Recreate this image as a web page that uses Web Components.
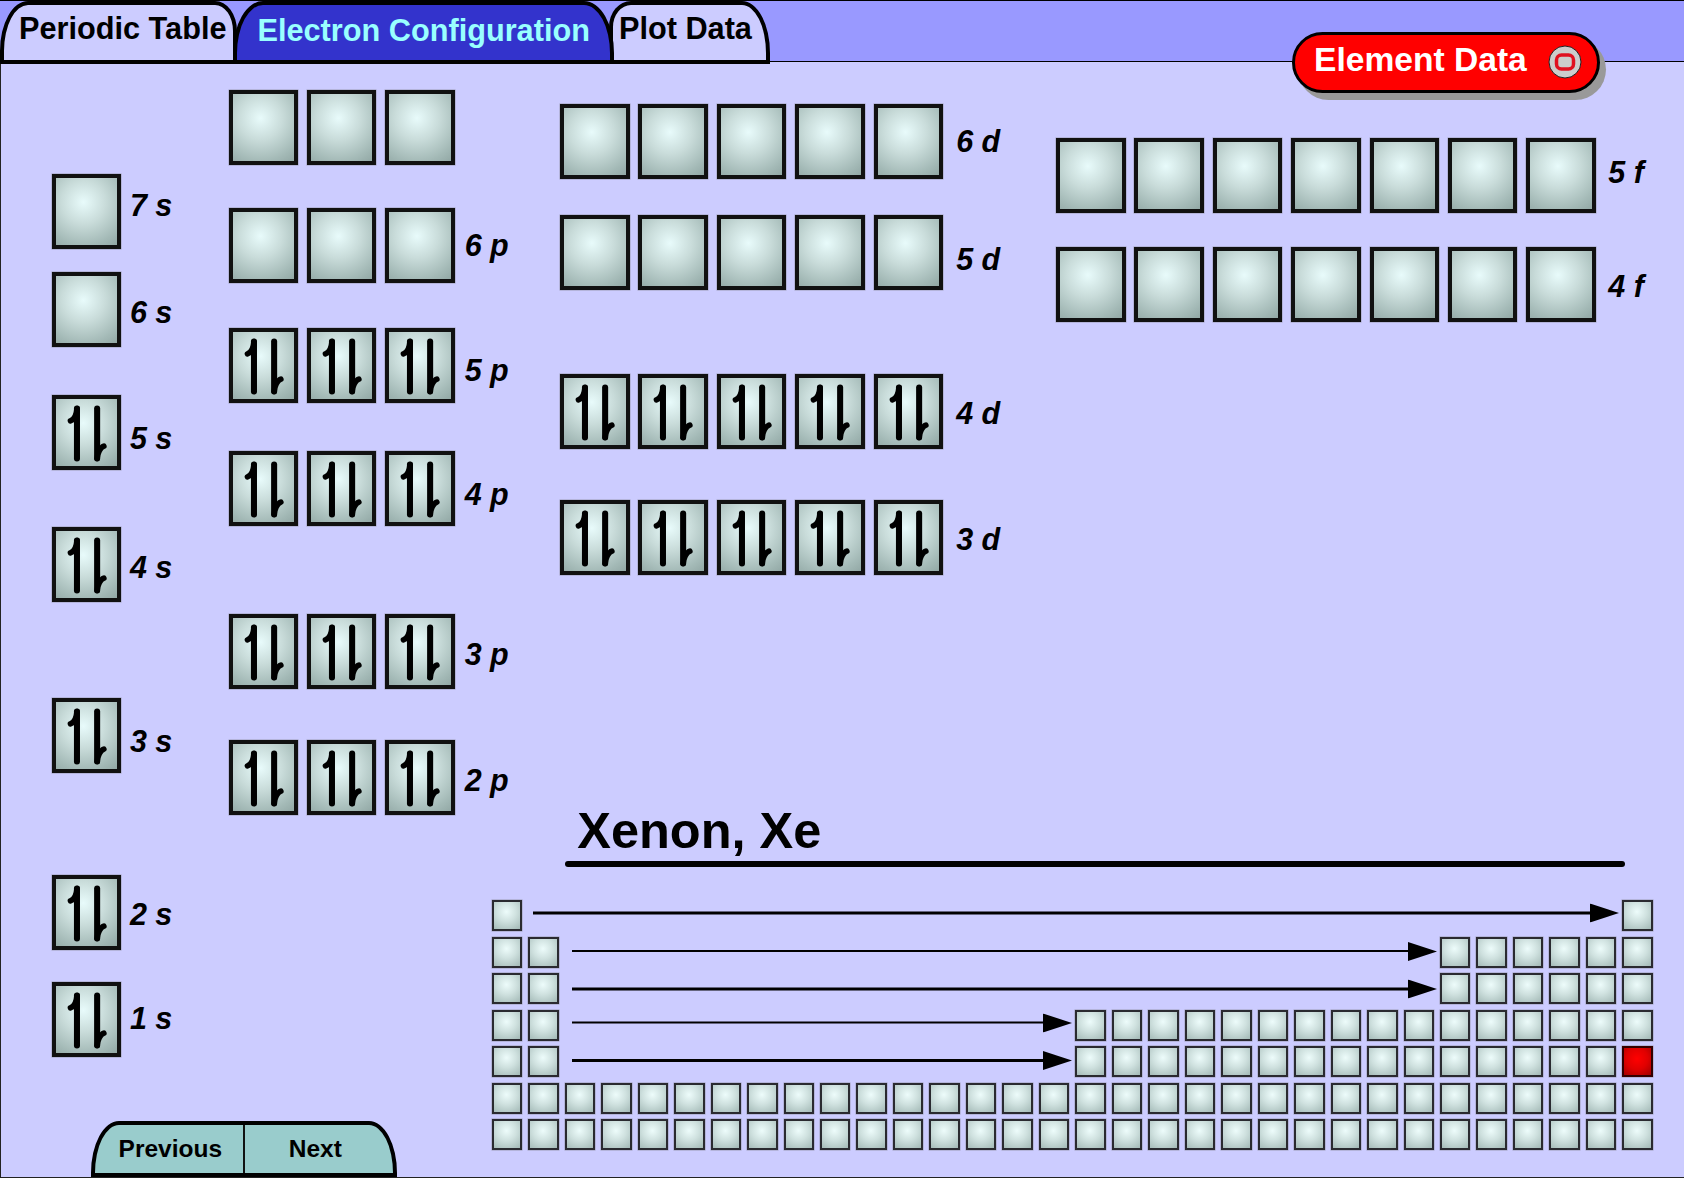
<!DOCTYPE html>
<html><head><meta charset="utf-8">
<style>
html,body{margin:0;padding:0;background:#ccf;overflow:hidden}
</style>
</head><body>
<template id="t-shell"><style>
:host{display:flex;flex-direction:column;width:1684px;height:1178px;box-sizing:border-box;font-family:"Liberation Sans",Arial,sans-serif;color:#000;background:#ccf;overflow:hidden}
</style><slot></slot></template>

<template id="t-bar"><style>
:host{display:flex;position:relative;height:62px;flex:none;box-sizing:border-box;background:linear-gradient(#000 0 1px,#99f 1px calc(100% - 1.5px),#000 calc(100% - 1.5px));padding-top:1px;z-index:1}
::slotted(element-button){position:absolute;left:1292px;top:31.500px;z-index:3}
</style><slot></slot></template>

<template id="t-tab"><style>
:host{display:flex;align-items:flex-start;box-sizing:border-box;height:62.500px;flex:none;align-self:flex-start;border:4px solid #000;border-radius:30px 30px 0 0/52px 52px 0 0;background:#ccf;font-weight:700;font-size:30.700px;line-height:34px;padding-top:7px;white-space:nowrap;position:relative;z-index:1}
:host([active]){background:#33c;color:#9ff;z-index:2;padding-top:9px}
</style><slot></slot></template>

<template id="t-btn"><style>
:host{display:flex;align-items:center;box-sizing:border-box;width:308px;height:61px;border:3.500px solid #000;border-radius:31px;background:#f00;color:#fff;font-weight:700;font-size:33.600px;box-shadow:6px 7px 0 #999;padding-left:19px;white-space:nowrap}
span{flex:1;margin-top:-5px}
svg{margin-right:15px;flex:none}
</style><span><slot></slot></span><svg width="34" height="34" viewBox="0 0 34 34"><circle cx="17" cy="17" r="16" fill="#ccc" stroke="#222" stroke-width="1"/><rect x="8.500" y="10" width="17" height="14" rx="5" fill="#ccc" stroke="#e01020" stroke-width="3.500"/></svg></template>

<template id="t-main"><style>
:host{display:grid;flex:1;min-height:0;box-sizing:border-box;grid-template-columns:227.500px 262px 69.500px 1fr;grid-template-rows:738px 67px 1fr;border-left:1.500px solid #222;border-bottom:1.500px solid #222}
::slotted(.s){grid-column:1;grid-row:1/4;margin-left:50.500px}
::slotted(.p){grid-column:2/4;grid-row:1/3}
::slotted(.df){grid-column:4;grid-row:1;display:flex;gap:0}
::slotted(element-title){grid-column:4;grid-row:2;margin-left:-.8px}
::slotted(periodic-map){grid-column:3/5;grid-row:3;margin-left:1.300px}
::slotted(step-nav){grid-column:1/3;grid-row:1/4;align-self:end;justify-self:start;margin-left:90px}
</style><slot></slot></template>

<template id="t-col"><style>
:host{display:flex;flex-direction:column;align-items:flex-start}
</style><slot></slot></template>

<template id="t-row"><style>
:host{display:flex;align-items:center;gap:8.900px;flex:none}
b{font-size:30.500px;font-style:italic;font-weight:700;line-height:34px;white-space:pre;margin-left:var(--lx,0px);transform:translateY(var(--dy,0px))}
</style><span id="c" style="display:contents"></span><b id="l"></b></template>

<template id="t-cell"><style>
:host{display:block;box-sizing:border-box;width:69.500px;height:75px;flex:none;border:4px solid #111;background:radial-gradient(circle at 45% 36%,#e8fbfb 0%,#c9dcda 40%,#a3b9b6 80%,#92a8a5 100%);box-shadow:0 0 0 .5px #7778}
svg{display:block;width:100%;height:100%}
</style><svg viewBox="4 4 61 67" preserveAspectRatio="none" id="s" fill="none" stroke="#000" stroke-linecap="round" stroke-linejoin="round"></svg></template>

<template id="t-title"><style>
:host{display:block;padding-top:3px}
h1{margin:0 0 2px 18px;font-size:50.500px;line-height:56px;font-weight:700}
div{margin-left:6px;width:1060px;height:5.500px;background:#000;border-radius:3px}
</style><h1><slot></slot></h1><div></div></template>

<template id="t-map"><style>
:host{display:grid;grid-template-columns:repeat(32,30.480px);grid-auto-rows:31px;column-gap:6px;row-gap:5.500px;margin-top:33px;align-content:start}
</style><slot></slot></template>

<template id="t-mini"><style>
:host{display:block;box-sizing:border-box;border:2px solid #2a2a30;background:radial-gradient(circle at 48% 36%,#edfcfb 0%,#cfe1df 45%,#a3b9b6 100%);box-shadow:0 0 0 .5px #7778}
:host([hot]){background:radial-gradient(circle at 48% 40%,#f00 0%,#e00000 50%,#a00000 100%);border-color:#300}
</style></template>

<template id="t-arrow"><style>
:host{display:flex;align-items:center;min-width:0;height:19px;align-self:center}
i{flex:1;height:2.600px;background:#000}
svg{flex:none;margin-left:-1px}
</style><i></i><svg width="29" height="19" viewBox="0 0 29 19"><path d="M0 0L29 9.500L0 19Z" fill="#000"/></svg></template>

<template id="t-nav"><style>
:host{display:flex;box-sizing:border-box;width:306px;height:56px;border:4px solid #000;border-radius:28px 28px 0 0/52px 52px 0 0;background:#9cc;font-weight:700;font-size:24.500px}
::slotted(*){display:flex;align-items:center;justify-content:center;padding-bottom:1px}
::slotted(:first-child){width:150px;border-right:2.500px solid #111;padding-left:2.600px;box-sizing:border-box}
::slotted(:last-child){flex:1;padding-right:7.400px}
</style><slot></slot></template>

<app-shell>
  <tab-bar>
    <tab-item style="padding-left:15px;padding-right:7px;border-radius:28px 22px 0 0/50px 30px 0 0">Periodic Table</tab-item>
    <tab-item active style="padding-left:20px;padding-right:20px;margin-left:-4px">Electron Configuration</tab-item>
    <tab-item style="padding-left:6px;padding-right:14px;margin-left:-5px;border-radius:22px 28px 0 0/26px 52px 0 0">Plot Data</tab-item>
    <element-button>Element Data</element-button>
  </tab-bar>
  <main-area>
    <orbital-col class="s">
      <orbital-row gap="112" n="1" label="7 s" dy="-7"></orbital-row>
      <orbital-row gap="23" n="1" label="6 s" dy="2"></orbital-row>
      <orbital-row gap="48" n="1" filled label="5 s" dy="5"></orbital-row>
      <orbital-row gap="57" n="1" filled label="4 s" dy="2"></orbital-row>
      <orbital-row gap="96" n="1" filled label="3 s" dy="5"></orbital-row>
      <orbital-row gap="102" n="1" filled label="2 s" dy="1"></orbital-row>
      <orbital-row gap="31.500" n="1" filled label="1 s" dy="-1"></orbital-row>
    </orbital-col>
    <orbital-col class="p">
      <orbital-row gap="28" n="3"></orbital-row>
      <orbital-row gap="42.500" n="3" label="6 p" dy="0" lx="1"></orbital-row>
      <orbital-row gap="45" n="3" filled label="5 p" dy="5" lx="1"></orbital-row>
      <orbital-row gap="48.500" n="3" filled label="4 p" dy="5" lx="1"></orbital-row>
      <orbital-row gap="88" n="3" filled label="3 p" dy="2" lx="1"></orbital-row>
      <orbital-row gap="51" n="3" filled label="2 p" dy="2" lx="1"></orbital-row>
    </orbital-col>
    <div class="df">
      <orbital-col style="width:496px">
        <orbital-row gap="42" n="5" label="6 d" dy="-1" lx="4.200"></orbital-row>
        <orbital-row gap="36" n="5" label="5 d" dy="6" lx="4.200"></orbital-row>
        <orbital-row gap="84" n="5" filled label="4 d" dy="1" lx="4.200"></orbital-row>
        <orbital-row gap="50.500" n="5" filled label="3 d" dy="2" lx="4.200"></orbital-row>
      </orbital-col>
      <orbital-col>
        <orbital-row gap="75.500" n="7" label="5 f" dy="-3" lx="3.500"></orbital-row>
        <orbital-row gap="34.500" n="7" label="4 f" dy="1" lx="3.500"></orbital-row>
      </orbital-col>
    </div>
    <element-title>Xenon, Xe</element-title>
    <periodic-map id="map"></periodic-map>
    <step-nav><span>Previous</span><span>Next</span></step-nav>
  </main-area>
</app-shell>
<script>
function def(name,tpl,extra){
  customElements.define(name,class extends HTMLElement{
    constructor(){super();this.attachShadow({mode:'open'}).appendChild(document.getElementById(tpl).content.cloneNode(true));}
    connectedCallback(){if(extra)extra(this);}
  });
}
const ARROWS='<path stroke-width="6" d="M24.800 13.500V63.500"/><path stroke-width="5.500" d="M24.800 13.500C24.300 19 22 24.500 18.300 25.800"/><path stroke-width="6" d="M44.800 13.500V63.500"/><path stroke-width="5.500" d="M44.800 63.500C45.300 58 48 52.500 51.500 51.200"/>';
def('app-shell','t-shell');
def('tab-bar','t-bar');
def('tab-item','t-tab');
def('element-button','t-btn');
def('main-area','t-main');
def('orbital-col','t-col');
def('orbital-cell','t-cell',el=>{ if(el.hasAttribute('filled')) el.shadowRoot.getElementById('s').innerHTML=ARROWS; });
def('orbital-row','t-row',el=>{
  const r=el.shadowRoot,c=r.getElementById('c'),n=+el.getAttribute('n');
  el.style.marginTop=el.getAttribute('gap')+'px';
  for(let i=0;i<n;i++){const o=document.createElement('orbital-cell');if(el.hasAttribute('filled'))o.setAttribute('filled','');c.appendChild(o);}
  const l=r.getElementById('l'),t=el.getAttribute('label');
  if(t){l.textContent=t;el.style.setProperty('--dy',(el.getAttribute('dy')||0)+'px');el.style.setProperty('--lx',(el.getAttribute('lx')||0)+'px');}else l.remove();
});
def('element-title','t-title');
def('mini-cell','t-mini');
def('map-arrow','t-arrow');
def('step-nav','t-nav');
def('periodic-map','t-map',el=>{
  const add=(row,col,hot)=>{const m=document.createElement('mini-cell');m.style.gridRow=row;m.style.gridColumn=col;if(hot)m.setAttribute('hot','');el.appendChild(m);};
  const arrow=(row,from,to,ml,mr,dy)=>{const a=document.createElement('map-arrow');a.style.gridRow=row;a.style.gridColumn=from+'/'+to;a.style.marginLeft=ml+'px';a.style.marginRight=mr+'px';a.style.transform='translateY('+dy+'px)';el.appendChild(a);};
  add(1,1);add(1,32);arrow(1,2,32,5,-2.7,-2.5);
  [[2,27,-1],[3,27,0.5],[4,17,-2.5],[5,17,-1]].forEach(([r,s,dy])=>{
    add(r,1);add(r,2);arrow(r,3,s,7.2,-3,dy);
    for(let c=s;c<=32;c++)add(r,c,r===5&&c===32);
  });
  [6,7].forEach(r=>{for(let c=1;c<=32;c++)add(r,c);});
});
</script>
</body></html>
